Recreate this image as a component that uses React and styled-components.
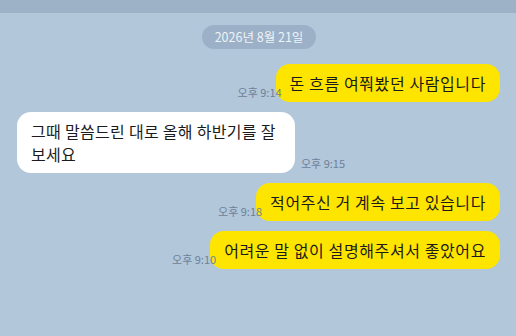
import React from 'react'
import styled, {createGlobalStyle} from 'styled-components'

const Global = createGlobalStyle`
  html, body {
    margin: 0;
    padding: 0;
    background: #b2c7da;
  }
  body {
    font-family: "Noto Sans CJK KR", "Noto Sans", sans-serif;
  }
`;

const Screen = styled.div`
  width: 516px;
  height: 336px;
  background: #b2c7da;
  overflow: hidden;
  display: flex;
  flex-direction: column;
`;

const TopBar = styled.div`
  height: 13px;
  background: #9db2c7;
  flex-shrink: 0;
`;

const Feed = styled.div`
  display: flex;
  flex-direction: column;
  gap: 10px;
  padding: 12px 16px 0 17px;
`;

const DateRow = styled.div`
  display: flex;
  justify-content: center;
  margin-bottom: 5px;
`;

const DatePill = styled.div`
  height: 24px;
  padding: 0 13px;
  border-radius: 12px;
  background: #9cb1c7;
  color: #eef3f8;
  font-size: 12.5px;
  line-height: 24px;
  margin-left: 1px;
`;

const Row = styled.div`
  display: flex;
  align-items: flex-end;
  justify-content: ${p => (p.$mine ? 'flex-end' : 'flex-start')};
`;

const Bubble = styled.div`
  max-width: ${p => (p.$mine ? '300px' : '278px')};
  box-sizing: border-box;
  padding: 8px 14px 7px;
  border-radius: 14px;
  background: ${p => (p.$mine ? '#fee500' : '#ffffff')};
  color: #1b1b1b;
  font-size: 16px;
  line-height: 23px;
  letter-spacing: ${p => (p.$mine ? '0.6px' : '0.3px')};
`;

const Time = styled.span`
  position: relative;
  z-index: 1;
  order: ${p => (p.$mine ? -1 : 1)};
  font-size: 11px;
  color: #6e8198;
  line-height: 14px;
  margin: ${p => (p.$mine ? '0 -6px 3px 0' : '0 0 3px 6px')};
  white-space: nowrap;
`;

const messages = [
  {mine: true, text: '돈 흐름 여쭤봤던 사람입니다', time: '오후 9:14'},
  {mine: false, text: '그때 말씀드린 대로 올해 하반기를 잘 보세요', time: '오후 9:15'},
  {mine: true, text: '적어주신 거 계속 보고 있습니다', time: '오후 9:18'},
  {mine: true, text: '어려운 말 없이 설명해주셔서 좋았어요', time: '오후 9:10'},
];

export default function App(){
  return (
    <Screen>
      <Global/>
      <TopBar/>
      <Feed>
        <DateRow>
          <DatePill>2026년 8월 21일</DatePill>
        </DateRow>
        {messages.map((m, i) => (
          <Row key={i} $mine={m.mine}>
            <Bubble $mine={m.mine}>{m.text}</Bubble>
            <Time $mine={m.mine}>{m.time}</Time>
          </Row>
        ))}
      </Feed>
    </Screen>
  )
}
